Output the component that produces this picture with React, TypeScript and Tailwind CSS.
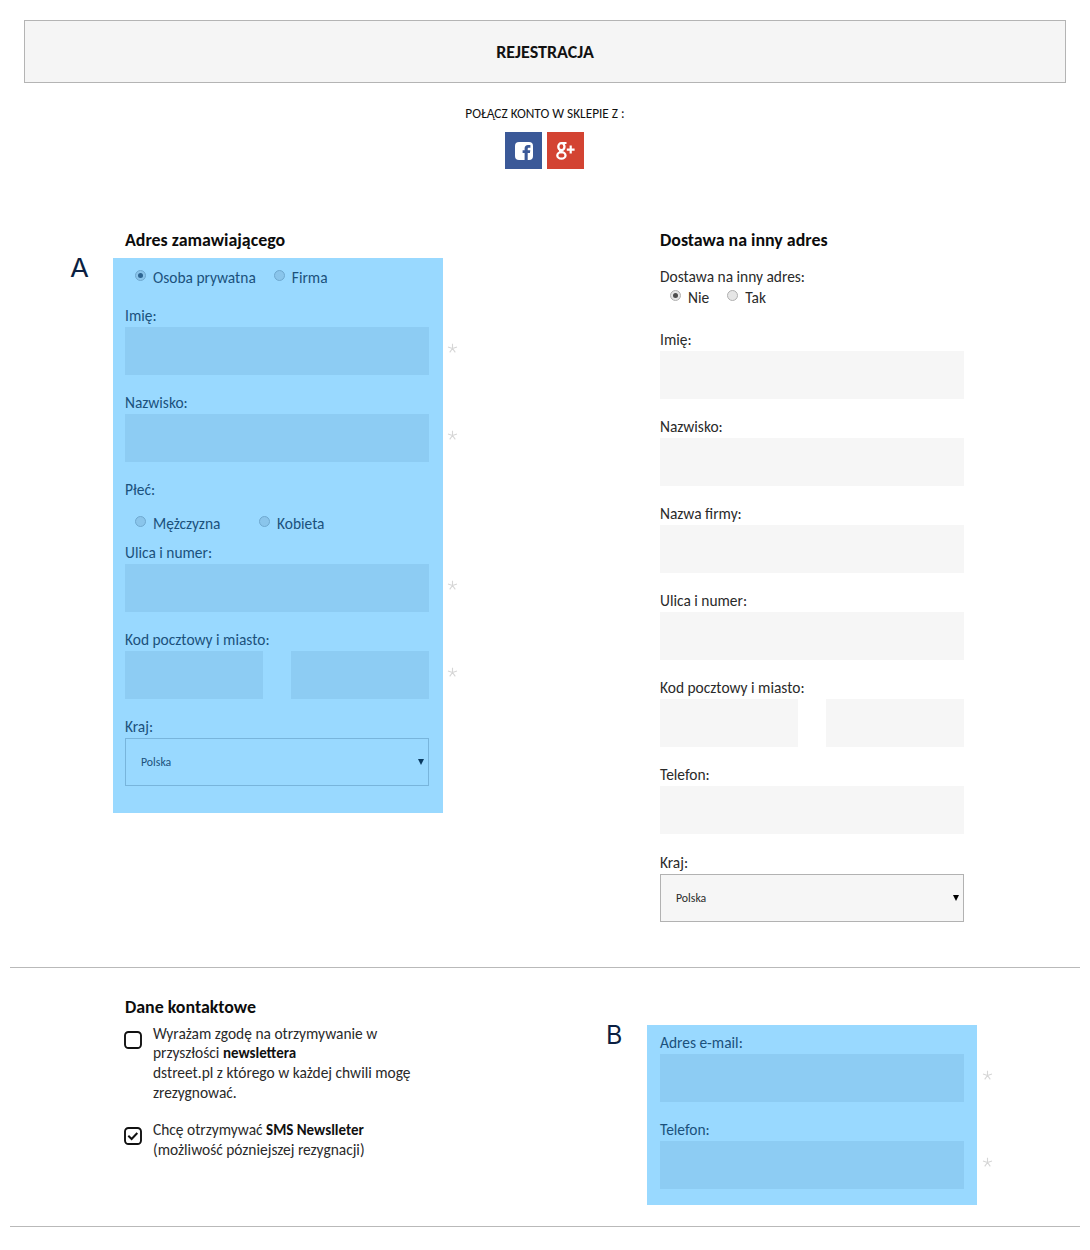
import React from "react";

type Tone = { tinted?: boolean };

function Label({ children }: { children: React.ReactNode }) {
  return <div className="h-6 whitespace-nowrap text-[15.45px] leading-[26px]">{children}</div>;
}

function Box({ tinted, className = "w-[304px]" }: Tone & { className?: string }) {
  return <div className={`h-12 ${tinted ? "bg-[#8dccf3]" : "bg-[#f6f6f6]"} ${className}`} />;
}

function Star() {
  return (
    <span className="absolute left-[322px] top-[16px] text-[#d6d6d6]">
      <svg width="11" height="11" viewBox="0 0 11 11" fill="none" stroke="currentColor" strokeWidth="1.1">
        <path d="M5.5 5.5V.8M5.5 5.5L1 4M5.5 5.5L10 4M5.5 5.5L2.7 9.4M5.5 5.5L8.3 9.4" />
      </svg>
    </span>
  );
}

function Field({ label, tinted, required, split }: Tone & { label: string; required?: boolean; split?: boolean }) {
  return (
    <div className="mb-[15.1px]">
      <Label>{label}</Label>
      <div className="relative flex w-[304px] justify-between">
        {split ? (
          <>
            <Box tinted={tinted} className="w-[138px]" />
            <Box tinted={tinted} className="w-[138px]" />
          </>
        ) : (
          <Box tinted={tinted} />
        )}
        {required && <Star />}
      </div>
    </div>
  );
}

function Country({ tinted }: Tone) {
  return (
    <div>
      <Label>Kraj:</Label>
      <div
        className={`flex h-12 w-[304px] items-center justify-between border pl-[15px] pr-1 ${
          tinted ? "border-[#78b5dc]" : "border-[#b2b2b2] bg-[#f6f6f6]"
        }`}
      >
        <span className="pt-px text-[11.8px] leading-4">Polska</span>
        <svg width="6" height="6" viewBox="0 0 6 6" className={tinted ? "text-[#0a3a60]" : "text-black"}>
          <path d="M0 0H6L3 6Z" fill="currentColor" />
        </svg>
      </div>
    </div>
  );
}

function Radio({ label, checked, tinted }: Tone & { label: string; checked?: boolean }) {
  return (
    <div className="flex h-5 items-start">
      <span
        className={`mt-[2px] flex size-[11px] shrink-0 items-center justify-center rounded-full border ${
          tinted ? "border-[#6fa9d0] bg-[#8ac5eb]" : "border-[#b0b0b0] bg-[#e6e6e6]"
        }`}
      >
        {checked && <span className={`size-[5px] rounded-full ${tinted ? "bg-[#2d6591]" : "bg-[#4d4d4d]"}`} />}
      </span>
      <span className="ml-[7px] whitespace-nowrap text-[15.45px] leading-5">{label}</span>
    </div>
  );
}

function Heading({ children }: { children: React.ReactNode }) {
  return <h2 className="h-6 whitespace-nowrap text-[17.9px] font-bold leading-[26px] text-[#0c0c0c]">{children}</h2>;
}

function Check({ checked }: { checked?: boolean }) {
  return (
    <svg width="18" height="18" viewBox="0 0 18 18" fill="none" stroke="#111" className="mt-[7px] shrink-0">
      <rect x="1" y="1" width="16" height="16" rx="3.5" strokeWidth="1.9" />
      {checked && <path d="M4.3 8.8L7.6 12L13.3 6" strokeWidth="2" />}
    </svg>
  );
}

export default function App() {
  return (
    <div className="h-[1250px] w-[1090px] overflow-hidden bg-white font-['Carlito','Lato',sans-serif] text-[#2a2a2a]">
      <header className="mx-6 mt-5 flex h-[63px] items-center justify-center border border-[#b4b4b4] bg-[#f5f5f5]">
        <h1 className="pt-[2px] text-[18px] font-bold text-[#111]">REJESTRACJA</h1>
      </header>

      <div className="flex h-[144px] flex-col items-center pt-[21px]">
        <p className="h-5 text-[13.3px] leading-5 text-[#111]">POŁĄCZ KONTO W SKLEPIE Z :</p>
        <div className="mr-px mt-2 flex gap-[5px]">
          <div className="flex size-[37px] items-center justify-center bg-[#3b5998]">
            <svg width="18" height="18" viewBox="0 0 18 18">
              <rect width="18" height="18" rx="4" fill="#fff" />
              <path d="M9.6 18V11H7.6V8.2H9.6V6.6C9.6 4.3 10.9 3 13 3H15.4V5.8H13.9C13 5.8 12.7 6.2 12.7 7V8.2H15.3L14.9 11H12.7V18Z" fill="#3b5998" />
            </svg>
          </div>
          <div className="flex size-[37px] items-center justify-center bg-[#d34332]">
            <svg width="19" height="18" viewBox="0 0 19 18" fill="none" stroke="#fff">
              <ellipse cx="5.4" cy="4.7" rx="3.1" ry="3.5" strokeWidth="2.3" />
              <path d="M5.7 1H10.5M4.5 8C3.2 9.4 4.4 9.9 5.9 10.5" strokeWidth="2" />
              <ellipse cx="5.4" cy="13.4" rx="4.1" ry="3.2" strokeWidth="2.3" />
              <path d="M14.7 3.6V11.6M10.8 7.6H18.6" strokeWidth="2.2" />
            </svg>
          </div>
        </div>
      </div>

      <main>
        <section className="mx-[10px] flex h-[741px] border-b border-[#b9b9b9]">
          <div className="w-[525px] pl-[60px]">
            <div className="pl-[55px]">
              <Heading>Adres zamawiającego</Heading>
            </div>
            <div className="mt-[7px] flex">
              <span className="w-[43px] origin-left scale-x-110 font-['Inter',sans-serif] text-[25px] leading-5 text-[#0b1f42]">A</span>
              <div className="h-[555px] w-[330px] bg-[#99d9ff] pl-3 pt-[10px] text-[#1b517c]">
                <div className="flex h-[35px] gap-[18px] pl-[10px]">
                  <Radio label="Osoba prywatna" checked tinted />
                  <Radio label="Firma" tinted />
                </div>
                <Field label="Imię:" tinted required />
                <Field label="Nazwisko:" tinted required />
                <div className="h-[62.5px]">
                  <Label>Płeć:</Label>
                  <div className="flex pl-[10px] pt-[13px]">
                    <div className="w-[124px]">
                      <Radio label="Mężczyzna" tinted />
                    </div>
                    <Radio label="Kobieta" tinted />
                  </div>
                </div>
                <Field label="Ulica i numer:" tinted required />
                <Field label="Kod pocztowy i miasto:" tinted required split />
                <Country tinted />
              </div>
            </div>
          </div>

          <div className="pl-[125px]">
            <Heading>Dostawa na inny adres</Heading>
            <div className="mt-[13px] h-[63px]">
              <div className="h-[23px] whitespace-nowrap text-[15.45px] leading-[26px]">Dostawa na inny adres:</div>
              <div className="flex gap-[18px] pl-[10px] pt-px">
                <Radio label="Nie" checked />
                <Radio label="Tak" />
              </div>
            </div>
            <Field label="Imię:" />
            <Field label="Nazwisko:" />
            <Field label="Nazwa firmy:" />
            <Field label="Ulica i numer:" />
            <Field label="Kod pocztowy i miasto:" split />
            <Field label="Telefon:" />
            <Country />
          </div>
        </section>

        <section className="mx-[10px] flex h-[259px] border-b border-[#b9b9b9]">
          <div className="w-[596px] pl-[114px] pt-[26px]">
            <div className="pl-px">
              <Heading>Dane kontaktowe</Heading>
            </div>
            <div className="mt-[6px] flex gap-[11px]">
              <Check />
              <p className="whitespace-nowrap text-[15.45px] leading-[19.2px]">
                Wyrażam zgodę na otrzymywanie w<br />
                przyszłości <b className="text-[15px] text-[#111]">newslettera</b>
                <br />
                dstreet.pl z którego w każdej chwili mogę
                <br />
                zrezygnować.
              </p>
            </div>
            <div className="mt-[18px] flex gap-[11px]">
              <Check checked />
              <p className="whitespace-nowrap text-[15.45px] leading-[19.2px]">
                Chcę otrzymywać <b className="text-[15px] text-[#111]">SMS Newslleter</b>
                <br />
                (możliwość pózniejszej rezygnacji)
              </p>
            </div>
          </div>
          <div className="flex pt-[57px]">
            <span className="w-[41px] font-['Inter',sans-serif] text-[25px] leading-5 text-[#0b1f42]">B</span>
            <div className="h-[180px] w-[330px] bg-[#99d9ff] pl-[13px] pt-[5.4px] text-[#1b517c]">
              <Field label="Adres e-mail:" tinted required />
              <Field label="Telefon:" tinted required />
            </div>
          </div>
        </section>
      </main>
    </div>
  );
}
